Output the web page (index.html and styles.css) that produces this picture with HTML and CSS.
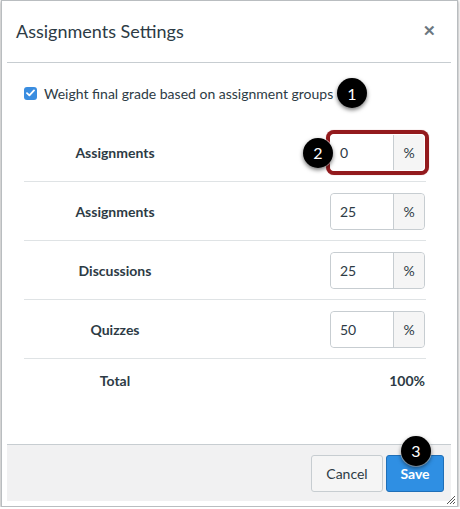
FILE: index.html
```html
<!DOCTYPE html>
<html lang="en">
<head>
<meta charset="utf-8">
<title>Assignments Settings</title>
<link rel="stylesheet" href="styles.css">
</head>
<body>
<div class="dialog">
  <div class="header">
    <h1 class="title">Assignments Settings</h1>
    <span class="close">&#x2715;</span>
  </div>
  <div class="content">
    <label class="check-row">
      <span class="checkbox"><svg width="9" height="8" viewBox="0 0 9 8"><path d="M1 4.2 L3.4 6.4 L8 1.4" fill="none" stroke="#fff" stroke-width="1.8" stroke-linecap="round" stroke-linejoin="round"/></svg></span>
      <span class="check-label">Weight final grade based on assignment groups</span>
      <span class="badge badge-1">1</span>
    </label>
    <div class="table">
      <div class="row">
        <div class="name">Assignments</div>
        <div class="cell">
          <div class="group highlight">
            <span class="badge badge-2">2</span>
            <span class="field">0</span><span class="addon">%</span>
          </div>
        </div>
      </div>
      <div class="row">
        <div class="name">Assignments</div>
        <div class="cell"><div class="group"><span class="field">25</span><span class="addon">%</span></div></div>
      </div>
      <div class="row">
        <div class="name">Discussions</div>
        <div class="cell"><div class="group"><span class="field">25</span><span class="addon">%</span></div></div>
      </div>
      <div class="row">
        <div class="name">Quizzes</div>
        <div class="cell"><div class="group"><span class="field">50</span><span class="addon">%</span></div></div>
      </div>
      <div class="row total">
        <div class="name">Total</div>
        <div class="cell total-value">100%</div>
      </div>
    </div>
  </div>
  <div class="footer">
    <button class="btn cancel">Cancel</button>
    <button class="btn save">Save<span class="badge badge-3">3</span></button>
  </div>
  <svg class="grip" width="10" height="10" viewBox="0 0 10 10"><path d="M1 9 L9 1 M4 9 L9 4 M7 9 L9 7" stroke="#555" stroke-width="1"/></svg>
</div>
</body>
</html>
```
FILE: styles.css
```css
* { box-sizing: border-box; }
html, body { margin: 0; padding: 0; background: #fff; }
body { font-family: Lato, "Liberation Sans", sans-serif; color: #2d3b45; }

.dialog {
  position: relative;
  margin-left: 1px;
  width: 457px;
  height: 507px;
  border: 1px solid #b9bdc0;
  background: #fff;
  padding: 0 6px 5px 5px;
  display: flex;
  flex-direction: column;
  box-shadow: 0 1px 3px rgba(0,0,0,0.45);
}

.header {
  height: 62px;
  border-bottom: 1px solid #c7cdd1;
  display: flex;
  align-items: center;
  justify-content: space-between;
  padding: 0 15px 0 9px;
  flex: none;
}
.title { margin: 0; font-size: 18px; font-weight: 400; color: #2d3b45; padding-bottom: 1px; }
.close { font-size: 15px; color: #6b7780; font-weight: 700; padding-bottom: 2px; }

.content { flex: 1; padding: 20px 25px 0 17px; }

.check-row { position: relative; display: flex; align-items: center; height: 20px; gap: 7px; }
.checkbox {
  width: 13px; height: 13px; border-radius: 3px; background: #3a8de0;
  display: flex; align-items: center; justify-content: center; flex: none;
}
.check-label { font-size: 14px; color: #2d3b45; }

.table { margin-top: 20px; }
.row {
  display: flex;
  align-items: center;
  height: 59px;
  border-bottom: 1px solid #dfe3e5;
}
.name { width: 182px; text-align: center; font-weight: 700; font-size: 14px; }
.cell { flex: 1; display: flex; justify-content: flex-end; }
.row.total { border-bottom: none; height: 43px; }
.total-value { font-weight: 700; font-size: 14px; padding-right: 1px; }

.group {
  position: relative;
  display: flex;
  height: 37px;
  margin-right: 1px;
  border: 1px solid #c7cdd1;
  border-radius: 4px;
  font-size: 14px;
}
.group.highlight { box-shadow: 0 0 0 4px #931a1d, 0 0 1px 4px rgba(147,26,29,0.5); border-color: #fff; border-radius: 4px; }
.field { width: 62px; display: flex; align-items: center; padding-left: 9px; background: #fff; border-radius: 4px 0 0 4px; }
.addon {
  width: 31px; display: flex; align-items: center; justify-content: center;
  background: #f5f5f5; border-left: 1px solid #c7cdd1; border-radius: 0 4px 4px 0;
}

.badge {
  position: absolute;
  width: 30px; height: 30px; border-radius: 50%;
  background: #000; color: #fff;
  font-family: Lato, "Liberation Sans", sans-serif;
  font-size: 16px; font-weight: 400;
  display: flex; align-items: center; justify-content: center;
  box-shadow: 0 2px 4px rgba(0,0,0,0.55), 0 0 0 1px rgba(255,255,255,0.6);
  z-index: 2;
}
.badge-1 { left: 313px; top: -5px; }
.badge-2 { left: -28px; top: 3px; }
.badge-3 { left: 14px; top: -20px; }

.footer {
  flex: none;
  height: 57px;
  background: #f1f1f2;
  border-top: 1px solid #c7cdd1;
  display: flex;
  align-items: center;
  justify-content: flex-end;
  gap: 3px;
  padding-right: 7px;
}
.btn {
  position: relative;
  height: 37px;
  border-radius: 3px;
  font-family: Lato, "Liberation Sans", sans-serif;
  font-size: 14px;
  padding: 0;
}
.cancel { width: 72px; background: #f5f5f5; border: 1px solid #c7cdd1; color: #2d3b45; }
.save { width: 58px; background: #2f8fe3; border: 1px solid #1f6fb8; color: #fff; font-weight: 700; }

.grip { position: absolute; right: 1px; bottom: 1px; }
```
